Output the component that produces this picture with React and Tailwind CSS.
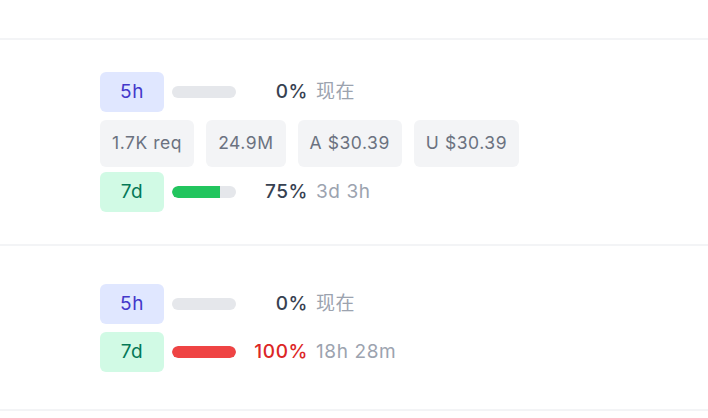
import React from "react";

// Usage windows for two accounts: rate-limit bars plus request / token / cost chips.
const rows = [
  {
    id: "a",
    pad: "pt-8 pb-8",
    windows: [
      { label: "5h", tone: "indigo", pct: 0, reset: "现在" },
      { label: "7d", tone: "green", pct: 75, reset: "3d 3h" },
    ],
    stats: ["1.7K req", "24.9M", "A $30.39", "U $30.39"],
  },
  {
    id: "b",
    pad: "pt-[38px] pb-[37px]",
    windows: [
      { label: "5h", tone: "indigo", pct: 0, reset: "现在" },
      { label: "7d", tone: "green", pct: 100, reset: "18h 28m" },
    ],
    stats: [],
  },
];

function WindowRow({ w }) {
  const full = w.pct >= 100;
  const badge =
    w.tone === "indigo"
      ? "bg-[#e0e7ff] text-[#4338ca]"
      : "bg-[#d1fae5] text-[#047857]";
  return (
    <div className="flex items-center gap-2">
      <div className={`w-16 h-10 rounded-md flex items-center justify-center text-[19px] tracking-[0.5px] ${badge}`}>
        {w.label}
      </div>
      <div className="w-16 h-3 rounded-full bg-[#e5e7eb] overflow-hidden">
        <div
          className={`h-full rounded-l-full ${full ? "bg-[#ef4444] rounded-r-full" : "bg-[#22c55e]"}`}
          style={{ width: `${w.pct}%` }}
        />
      </div>
      <div className="flex items-center gap-2 text-[19px] tracking-[0.6px]">
        <span className={`w-16 text-right font-medium ${full ? "text-[#dc2626]" : "text-[#374151]"}`}>
          {w.pct}%
        </span>
        <span className="text-[#9ca3af]">{w.reset}</span>
      </div>
    </div>
  );
}

export default function App() {
  return (
    <div
      className="w-[708px] h-[418px] bg-white overflow-hidden"
      style={{ fontFamily: "Inter, 'Noto Sans CJK SC', sans-serif" }}
    >
      <div className="h-[40px] border-b-2 border-[#f3f4f6]" />
      {rows.map((r) => (
        <div key={r.id} className={`pl-[100px] border-b-2 border-[#f3f4f6] ${r.pad}`}>
          <WindowRow w={r.windows[0]} />
          {r.stats.length > 0 ? (
            <div className="flex gap-3 mt-2">
              {r.stats.map((s) => (
                <div
                  key={s}
                  className="h-[47px] px-3 rounded-md bg-[#f3f4f6] text-[#6b7280] text-[17.5px] tracking-[0.55px] flex items-center"
                >
                  {s}
                </div>
              ))}
            </div>
          ) : null}
          <div className={r.stats.length > 0 ? "mt-[5px]" : "mt-2"}>
            <WindowRow w={r.windows[1]} />
          </div>
        </div>
      ))}
    </div>
  );
}
